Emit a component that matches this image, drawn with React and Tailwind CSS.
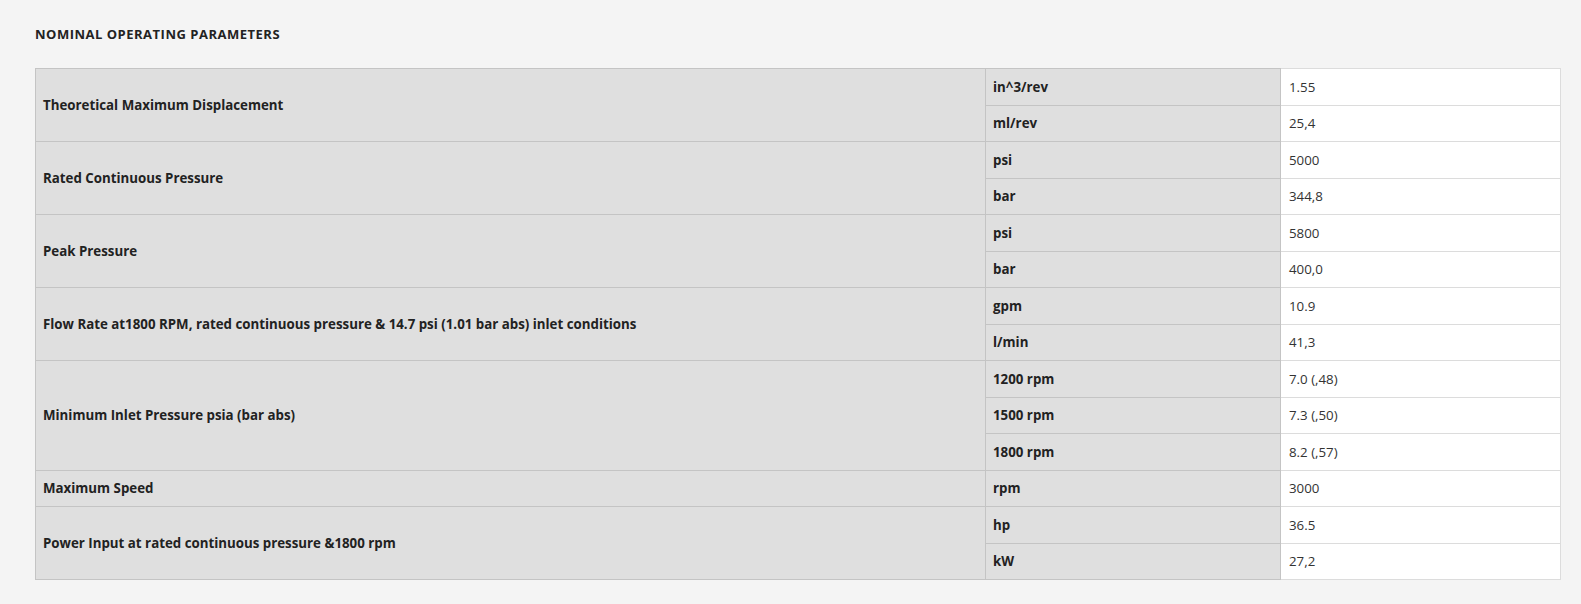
import React from "react";

const groups = [
  { label: "Theoretical Maximum Displacement", rows: [["in^3/rev", "1.55"], ["ml/rev", "25,4"]] },
  { label: "Rated Continuous Pressure", rows: [["psi", "5000"], ["bar", "344,8"]] },
  { label: "Peak Pressure", rows: [["psi", "5800"], ["bar", "400,0"]] },
  {
    label: "Flow Rate at1800 RPM, rated continuous pressure & 14.7 psi (1.01 bar abs) inlet conditions",
    rows: [["gpm", "10.9"], ["l/min", "41,3"]],
  },
  {
    label: "Minimum Inlet Pressure psia (bar abs)",
    rows: [["1200 rpm", "7.0 (,48)"], ["1500 rpm", "7.3 (,50)"], ["1800 rpm", "8.2 (,57)"]],
  },
  { label: "Maximum Speed", rows: [["rpm", "3000"]] },
  { label: "Power Input at rated continuous pressure &1800 rpm", rows: [["hp", "36.5"], ["kW", "27,2"]] },
];

export default function App() {
  return (
    <div
      className="min-h-[604px] bg-[#f4f4f4] pl-[35px] pr-[21px] pt-[26px] text-[13px] text-[#222]"
      style={{ fontFamily: "'Open Sans', Lato, sans-serif" }}
    >
      <h2 className="mb-[26px] text-[13px] font-bold uppercase leading-4 tracking-[0.5px] text-[#222]">
        Nominal Operating Parameters
      </h2>
      <table className="w-[1525px] table-fixed border-collapse text-[13.3px]">
        <colgroup>
          <col className="w-[950px]" />
          <col className="w-[295px]" />
          <col className="w-[280px]" />
        </colgroup>
        <tbody>
          {groups.map((g) =>
            g.rows.map(([unit, value], i) => (
              <tr key={g.label + unit} className="h-[36.5px]">
                {i === 0 && (
                  <td
                    rowSpan={g.rows.length}
                    className="border border-[#c4c4c4] bg-[#dfdfdf] px-[7px] pt-[2px] align-middle font-bold text-[#222]"
                  >
                    {g.label}
                  </td>
                )}
                <td className="border border-[#c4c4c4] bg-[#dfdfdf] px-[7px] pt-[2px] align-middle font-bold text-[#222]">
                  {unit}
                </td>
                <td className="border border-[#dcdcdc] bg-white px-[8px] pt-[2px] align-middle text-[#333]">
                  {value}
                </td>
              </tr>
            ))
          )}
        </tbody>
      </table>
    </div>
  );
}
